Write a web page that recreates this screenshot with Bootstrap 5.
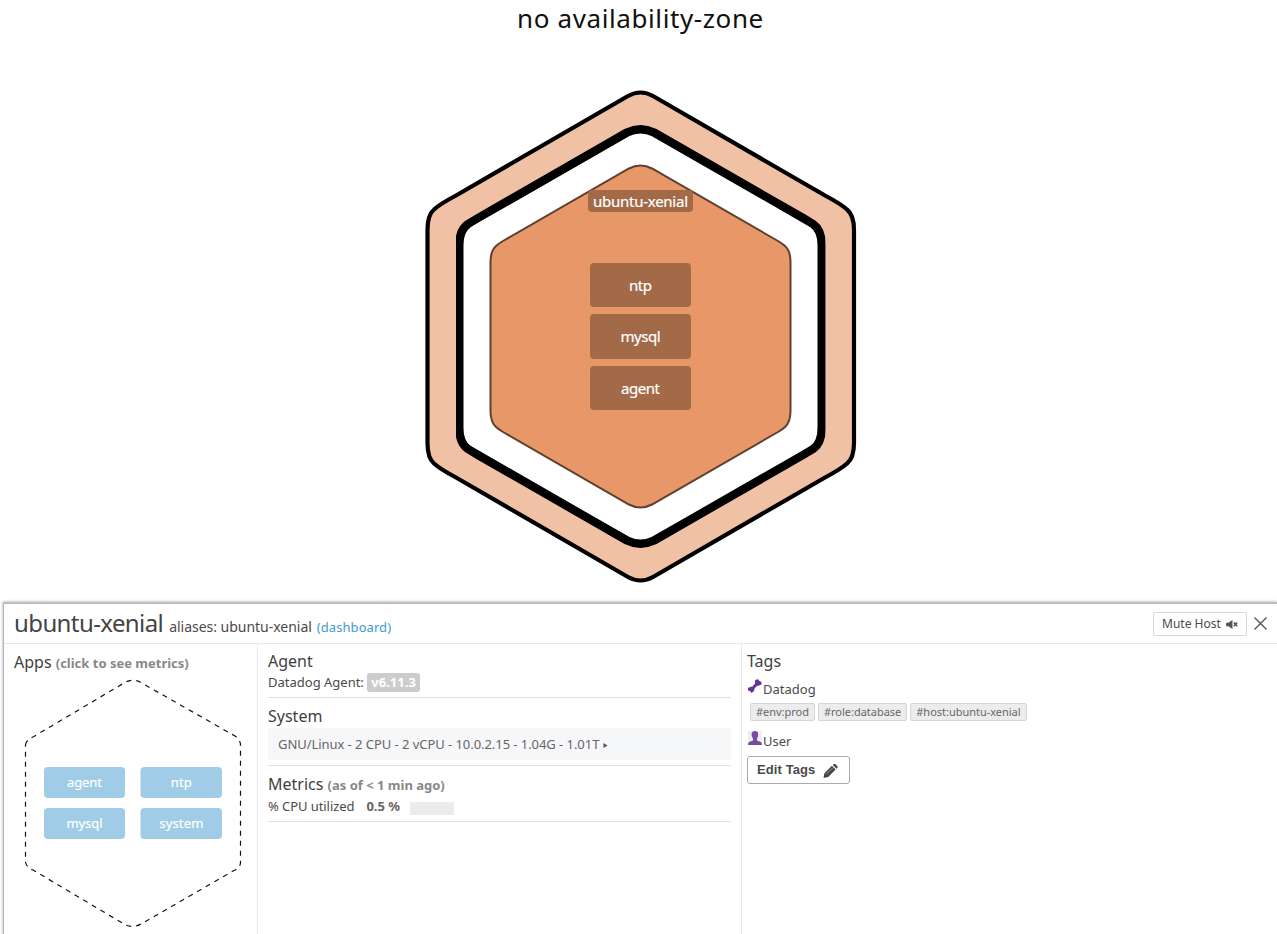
<!DOCTYPE html>
<html lang="en">
<head>
<meta charset="utf-8">
<title>Host map</title>
<link href="https://cdn.jsdelivr.net/npm/bootstrap@5.3.0/dist/css/bootstrap.min.css" rel="stylesheet">
<style>
body{font-family:"Noto Sans","Open Sans",sans-serif;font-size:13px;line-height:18px;color:#4a4a4a;background:#fff;height:934px;overflow:hidden}
.zone-title{font-size:26px;line-height:36px;height:38px;color:#111;letter-spacing:.6px;padding-left:4px}
.map-svg{height:564px;width:1277px}
.map-svg text,.apps-svg text{text-anchor:middle;fill:#fff;font-family:"Noto Sans",sans-serif}
.map-svg text{font-size:15px;stroke:#fff;stroke-width:.2px}
.apps-svg text{font-size:13px;stroke:#fff;stroke-width:.2px}
.panel{margin-left:3px;height:340px;border-top:2px solid #bdbdbd;border-left:1px solid #b5b5b5;box-shadow:0 0 3px #aaa}
.panel-head{height:40px;border-bottom:1px solid #e9e9e9;padding:0 10px}
.host-line{padding-bottom:2px}
.host-name{font-size:24px;line-height:36px;color:#444;letter-spacing:-.6px}
.alias{font-size:14px;color:#4a4a4a;margin-left:6px;letter-spacing:-.02px}
.alias a{color:#3f9bd3;margin-left:5px;font-size:13px;letter-spacing:.06px}
.btn-mute{width:94px;height:24px;border:1px solid #d9d9d9;border-radius:2px;font-size:12px;line-height:20px;padding:0 0 0 8px;color:#4a4a4a;text-align:left;margin-right:7px}
.btn-mute svg{margin-left:2px}
.col-apps{width:254px;border-right:1px solid #e9e9e9;padding:8px 0 0 10px}
.col-info{width:484px;border-right:1px solid #e9e9e9;padding:7px 10px}
.col-tags{padding:7px 5px}
.sec{font-size:16px;line-height:20px;color:#3f3f3f;font-weight:400;margin:0}
.sec b{font-size:13px;color:#888}
.sect{border-bottom:1px solid #e0e0e0}
.ver{background:#ccc;color:#fff;font-weight:700;font-size:13px;line-height:19px;border-radius:3px;padding:0 4.5px;margin-left:3px}
.sysbox{background:#f6f7f9;border-radius:3px;height:32px;line-height:32px;padding-left:10px;color:#666;margin-top:2px;letter-spacing:-.055px}
.pct{color:#666;margin-left:12px}
.meter{width:44px;height:13px;background:#ececec;margin-left:10px}
.tagpill{font-size:11px;line-height:16px;height:18px;background:#ececec;border:1px solid #d6d6d6;border-radius:2px;color:#666;padding:0 5px;letter-spacing:-.02px}
.btn-edit{font-family:"Liberation Sans",Arial,sans-serif;font-weight:700;font-size:13px;letter-spacing:.1px;width:103px;height:28px;border:1px solid #aaa;border-radius:3px;color:#4a4a4a;padding:0 0 0 9px;text-align:left;line-height:26px}
</style>
</head>
<body>
<h1 class="zone-title text-center fw-normal m-0">no availability-zone</h1>
<svg class="map-svg d-block" viewBox="0 38 1277 564">
<defs><clipPath id="c"><path d="M456 38H825.5V602H456z"/></clipPath></defs>
<path d="M427.5 230Q427.5 215 434 209.500Q440 204 456 195.500L628 96Q640.5 89 653 96L825 195.500Q841 204 847 209.500Q854 215 854 230V443Q854 458 847 463.500Q841 469 825 477.500L653 577Q640.5 584 628 577L456 477.500Q440 469 434 463.500Q427.5 458 427.5 443Z" fill="#f1c1a6" stroke="#000" stroke-width="4.2"/>
<path clip-path="url(#c)" d="M459.3 245Q459.3 230 468 224L478 218L627 132.500Q640.5 126 654 132.500L803 218L813 224Q821.7 230 821.7 245V428Q821.7 443 813 449L803 455L654 540.500Q640.5 547 627 540.500L478 455L468 449Q459.3 443 459.3 428Z" fill="#fff" stroke="#000" stroke-width="8.4" stroke-linejoin="round"/>
<path d="M490.5 262Q490.5 251 496 246Q498 244 503 241L629 168.500Q640.5 162.500 652 168.500L778 241Q783 244 785 246Q790.5 251 790.5 262V411Q790.5 422 785 427Q783 429 778 432L652 504.500Q640.5 510.500 629 504.500L503 432Q498 429 496 427Q490.5 422 490.5 411Z" fill="#e89868" stroke="#5e4030" stroke-width="2"/>
<rect x="588" y="190" width="105" height="22" rx="4" fill="#a36a48"/>
<text x="640.5" y="207" textLength="95">ubuntu-xenial</text>
<g fill="#a36a48"><rect x="590" y="263" width="101" height="44" rx="4"/><rect x="590" y="314" width="101" height="45" rx="4"/><rect x="590" y="366" width="101" height="44" rx="4"/></g>
<text x="640.5" y="291" textLength="23">ntp</text><text x="640.5" y="342" textLength="40">mysql</text><text x="640.5" y="394" textLength="39">agent</text>
</svg>
<div class="panel d-flex flex-column">
<div class="panel-head d-flex align-items-center flex-shrink-0">
<div class="host-line me-auto text-nowrap"><span class="host-name">ubuntu-xenial</span><span class="alias">aliases: ubuntu-xenial<a class="text-decoration-none" href="#">(dashboard)</a></span></div>
<button class="btn btn-mute">Mute Host <svg width="12" height="9" viewBox="0 0 13 10" fill="#555"><path d="M0 3H2.5L7 0V10L2.5 7H0z"/><path d="M8.5 2.8L12.3 7M12.3 2.8L8.5 7" stroke="#555" stroke-width="1.7"/></svg></button>
<svg width="13" height="13" viewBox="0 0 13 13"><path d="M.5.5L12.5 12.5M12.5.5L.5 12.5" stroke="#555" stroke-width="1.4"/></svg>
</div>
<div class="d-flex flex-grow-1">
<section class="col-apps flex-shrink-0">
<h2 class="sec">Apps <b>(click to see metrics)</b></h2>
<svg class="apps-svg d-block" width="240" height="260" viewBox="14 673 240 260">
<path d="M25.5 745Q26 740 33 737L124 683Q132 678 140 682L235 736Q240.500 740 240.500 745V863Q240 868 233 871L141 924Q132 929 124 924L33 870Q26 867 25.500 862Z" fill="none" stroke="#111" stroke-width="1.2" stroke-dasharray="5 5"/>
<g fill="#a0cce7"><rect x="44" y="767" width="81" height="31" rx="4"/><rect x="140.500" y="767" width="81.500" height="31" rx="4"/><rect x="44" y="808" width="81" height="31" rx="4"/><rect x="140.500" y="808" width="81.500" height="31" rx="4"/></g>
<text x="84.500" y="787" textLength="35">agent</text><text x="181.300" y="787" textLength="21">ntp</text><text x="84.500" y="828" textLength="36">mysql</text><text x="181.300" y="828" textLength="44">system</text>
</svg>
</section>
<section class="col-info flex-shrink-0">
<div class="sect" style="height:47px"><h2 class="sec">Agent</h2><div class="d-flex align-items-center lh-1" style="margin-top:2px">Datadog Agent:<span class="ver">v6.11.3</span></div></div>
<div class="sect" style="height:68px;padding-top:8px"><h2 class="sec">System</h2><div class="sysbox">GNU/Linux - 2 CPU - 2 vCPU - 10.0.2.15 - 1.04G - 1.01T <svg width="5" height="5" viewBox="0 0 5 6" style="vertical-align:1px"><path d="M0 0L5 3L0 6z" fill="#555"/></svg></div></div>
<div class="sect" style="height:56px;padding-top:8px"><h2 class="sec">Metrics <b>(as of &lt; 1 min ago)</b></h2><div class="d-flex align-items-center" style="margin-top:2px"><span style="letter-spacing:-.07px">% CPU utilized</span><b class="pct">0.5 %</b><span class="meter mt-1"></span></div></div>
</section>
<section class="col-tags">
<h2 class="sec">Tags</h2>
<div class="d-flex mt-2"><svg width="16" height="14" viewBox="0 0 16 14" fill="#67329a"><path d="M1 9L3 8L5.500 7.500L8 4.500L8 1.500L10.500 0L12.500 2L14.500 3V5.500L12 6.500L10 7L7.500 9.500L7 12L4.500 14L3 12L1 11.500z"/></svg><span style="padding-top:1px">Datadog</span></div>
<div class="d-flex" style="margin:5px 0 0 3px;gap:3px"><span class="tagpill">#env:prod</span><span class="tagpill">#role:database</span><span class="tagpill">#host:ubuntu-xenial</span></div>
<div class="d-flex" style="margin-top:9px"><svg width="16" height="16" viewBox="0 0 16 16"><path d="M1 1H15V15H1z" fill="#eee"/><path d="M8 1Q12 1 11 6L10 9V10.500L14 12Q15 13 15 15H1Q1 13 2 12L6 10.500V9Q3 3 6 1.500z" fill="#794aa4"/></svg><span style="padding-top:2px">User</span></div>
<button class="btn btn-edit" style="margin-top:6px">Edit Tags <svg class="ms-1" width="15" height="14" viewBox="0 0 15 15" fill="#444"><path d="M0 15L1 10L9 2L13 6L5 14zM10 1L11 0H12.500L15 2.500V4L14 5z"/><path d="M3 11L10 4" stroke="#aaa"/></svg></button>
</section>
</div>
</div>
<script src="https://cdn.jsdelivr.net/npm/bootstrap@5.3.0/dist/js/bootstrap.bundle.min.js"></script>
</body>
</html>
